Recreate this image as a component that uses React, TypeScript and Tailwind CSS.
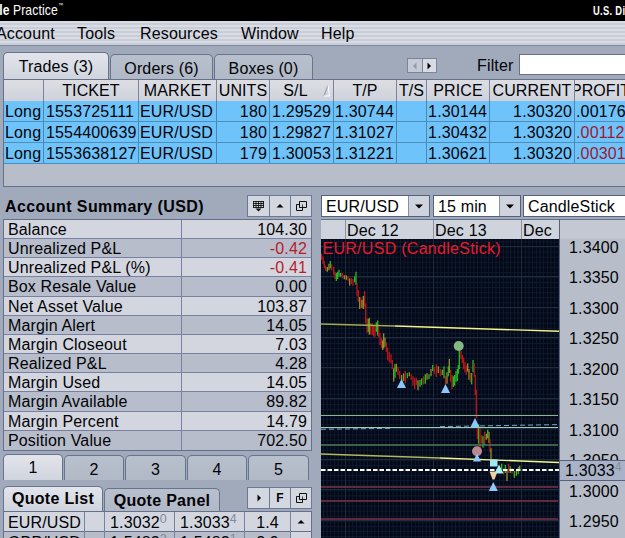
import type { ReactNode } from "react";
import clsx from "clsx";

const MENU = [
  { label: "Account", width: "-ml-[4px] w-[81px]" },
  { label: "Tools", width: "w-[63px]" },
  { label: "Resources", width: "w-[101px]" },
  { label: "Window", width: "w-[80px]" },
  { label: "Help", width: "w-[60px]" },
];

const TRADE_COLS = "grid grid-cols-[40px_95px_78px_53px_64px_63px_30px_63px_85px_60px]";

const TRADES = [
  ["Long", "1553725111", "EUR/USD", "180", "1.29529", "1.30744", "", "1.30144", "1.30320", ".00176"],
  ["Long", "1554400639", "EUR/USD", "180", "1.29827", "1.31027", "", "1.30432", "1.30320", ".00112"],
  ["Long", "1553638127", "EUR/USD", "179", "1.30053", "1.31221", "", "1.30621", "1.30320", ".00301"],
];

const SUMMARY = [
  ["Balance", "104.30"],
  ["Unrealized P&L", "-0.42"],
  ["Unrealized P&L (%)", "-0.41"],
  ["Box Resale Value", "0.00"],
  ["Net Asset Value", "103.87"],
  ["Margin Alert", "14.05"],
  ["Margin Closeout", "7.03"],
  ["Realized P&L", "4.28"],
  ["Margin Used", "14.05"],
  ["Margin Available", "89.82"],
  ["Margin Percent", "14.79"],
  ["Position Value", "702.50"],
];

const QUOTES = [
  { pair: "EUR/USD", bid: "1.3032", bidPip: "0", ask: "1.3033", askPip: "4", spread: "1.4" },
  { pair: "GBP/USD", bid: "1.5482", bidPip: "2", ask: "1.5482", askPip: "1", spread: "2.9" },
];

const PRICES = ["1.3400", "1.3350", "1.3300", "1.3250", "1.3200", "1.3150", "1.3100", "1.3050", "1.3000", "1.2950"];

const COLORS: Record<string, string> = { r: "#b81616", g: "#20b820", o: "#8f8f2a" };

// x, high, low, colour - in thirds of a pixel
type Candle = [number, number, number, string];

const CANDLES: Candle[] = [
  [20, 56, 74, "r"], [24, 64, 88, "r"], [28, 78, 100, "r"], [32, 92, 108, "r"], [37, 96, 110, "o"],
  [42, 86, 106, "o"], [46, 78, 100, "g"], [50, 88, 106, "r"], [56, 95, 120, "r"], [60, 110, 132, "r"],
  [64, 114, 138, "g"], [68, 110, 132, "g"], [72, 104, 125, "g"], [77, 114, 125, "o"], [82, 113, 130, "r"],
  [88, 121, 133, "o"], [94, 121, 134, "o"], [99, 123, 137, "r"], [104, 130, 152, "o"], [109, 130, 147, "r"],
  [114, 132, 152, "r"], [119, 124, 142, "g"], [123, 110, 150, "g"], [126, 145, 182, "r"], [130, 165, 200, "r"],
  [134, 186, 222, "o"], [138, 190, 220, "r"], [141, 195, 218, "o"], [145, 183, 222, "o"], [149, 168, 215, "r"],
  [152, 205, 265, "r"], [156, 250, 293, "r"], [160, 252, 290, "g"], [163, 248, 299, "o"], [167, 264, 298, "r"],
  [172, 265, 300, "r"], [176, 270, 305, "r"], [180, 274, 305, "r"], [184, 262, 290, "g"], [188, 256, 302, "g"],
  [191, 275, 308, "r"], [195, 295, 330, "r"], [199, 310, 338, "r"], [203, 316, 345, "o"], [206, 295, 340, "o"],
  [210, 308, 335, "o"], [214, 322, 350, "r"], [218, 338, 376, "r"], [223, 350, 382, "r"], [228, 358, 385, "r"],
  [232, 375, 402, "r"], [236, 400, 440, "o"], [240, 388, 428, "g"], [244, 386, 410, "o"], [249, 395, 420, "r"],
  [254, 408, 432, "r"], [260, 420, 455, "o"], [266, 415, 438, "o"], [271, 408, 445, "r"], [277, 414, 430, "g"],
  [283, 412, 424, "o"], [289, 418, 434, "r"], [294, 424, 452, "r"], [299, 428, 462, "r"], [304, 428, 450, "r"],
  [309, 436, 466, "o"], [315, 435, 455, "g"], [320, 430, 450, "g"], [326, 424, 448, "r"], [331, 418, 446, "g"],
  [336, 415, 434, "o"], [342, 418, 432, "g"], [348, 402, 424, "o"], [353, 390, 408, "g"], [358, 396, 416, "r"],
  [364, 388, 426, "r"], [370, 394, 414, "o"], [376, 402, 424, "r"], [382, 404, 420, "o"], [387, 394, 430, "g"],
  [392, 422, 448, "r"], [396, 412, 446, "o"], [400, 394, 424, "g"], [403, 372, 414, "o"], [407, 404, 440, "r"],
  [411, 420, 462, "r"], [415, 424, 456, "g"], [419, 420, 452, "g"], [423, 408, 440, "g"], [427, 402, 438, "g"],
  [430, 390, 416, "g"], [433, 345, 402, "g"], [438, 348, 372, "r"], [442, 360, 384, "r"], [446, 368, 402, "r"],
  [450, 382, 412, "r"], [454, 392, 420, "r"], [458, 385, 410, "o"], [462, 402, 434, "o"], [466, 414, 440, "r"],
  [470, 414, 448, "g"], [474, 375, 412, "g"], [478, 385, 425, "r"], [481, 420, 480, "r"], [484, 464, 550, "r"],
  [487, 574, 612, "r"], [491, 568, 626, "g"], [495, 578, 640, "r"], [500, 600, 624, "r"], [504, 604, 638, "g"],
  [509, 590, 630, "r"], [514, 596, 614, "o"], [518, 584, 610, "g"], [522, 590, 624, "o"], [525, 612, 652, "r"],
  [528, 640, 672, "o"], [560, 686, 706, "g"], [566, 700, 718, "r"], [571, 690, 714, "g"], [576, 708, 738, "o"],
  [581, 686, 714, "r"], [586, 694, 714, "g"], [591, 700, 716, "r"], [598, 708, 728, "g"], [604, 708, 722, "o"],
  [610, 696, 718, "g"], [614, 692, 704, "o"],
];

function Triangle({ x, y, fill = "#8cc8fa", s = 4.5 }: { x: number; y: number; fill?: string; s?: number }) {
  return <path d={`M${x} ${y - s} L${x + s} ${y + s} L${x - s} ${y + s} Z`} fill={fill} />;
}

function Chart() {
  return (
    <svg width="238" height="299" viewBox="321 239 238 299" className="block bg-[#030817]">
      <defs>
        <pattern id="fine" x="345" y="277" width="3.67" height="5.08" patternUnits="userSpaceOnUse">
          <path d="M0.5 0V5.08M0 0.5H3.67" stroke="#101c30" strokeWidth="0.8" />
        </pattern>
      </defs>
      <rect x="321" y="239" width="238" height="299" fill="url(#fine)" />
      <g stroke="#1f2c3e" strokeWidth="1">
        {[345.5, 433.5, 521.5].map((x) => (
          <line key={x} x1={x} x2={x} y1="239" y2="538" />
        ))}
        {[247, 277, 308, 338, 368, 399, 429, 460, 490, 521].map((y) => (
          <line key={y} x1="321" x2="559" y1={y - 0.5} y2={y - 0.5} />
        ))}
      </g>
      <g transform="translate(315 235) scale(0.33333)" strokeWidth="4">
        {CANDLES.map(([x, hi, lo, c]) => (
          <line key={x} x1={x} x2={x} y1={hi} y2={lo} stroke={COLORS[c]} />
        ))}
      </g>
      <g fill="none" strokeWidth="1">
        <path d="M321 415.5H558" stroke="#8fb38c" />
        <path d="M321 427.5H558" stroke="#9ccdb4" />
        <path d="M321 445H558" stroke="#4b7c55" strokeWidth="1.4" />
        <path d="M321 487H558M321 501H558M321 519H558" stroke="#7c3347" strokeWidth="1.5" />
        <path d="M321 429.3L392 428.3M440 426.6L559 424.6" stroke="#7aa3c8" strokeDasharray="5 3" />
        <path d="M321 324L395 326" stroke="#a2ab52" strokeWidth="1.4" />
        <path d="M395 326L559 331.3" stroke="#f4f48c" strokeWidth="1.4" />
        <path d="M321 454L440 458" stroke="#b4b75c" strokeWidth="1.4" />
        <path d="M440 458L559 462.5" stroke="#f4f48c" strokeWidth="1.4" />
      </g>
      <path d="M321 470H559" stroke="#fff" strokeWidth="2" strokeDasharray="4.5 2" />
      <circle cx="458.7" cy="346" r="5" fill="#86b886" />
      <Triangle x={401.5} y={383.5} />
      <Triangle x={445.5} y={388.5} />
      <Triangle x={475} y={422.5} />
      <circle cx="477" cy="451.3" r="5" fill="#b98991" />
      <Triangle x={477} y={457.5} s={4} />
      <path d="M489.5 471.5h8l-3 8h-2z" fill="#f0cf9c" />
      <rect x="490" y="459.5" width="7.5" height="7" fill="#9feaf2" />
      <Triangle x={499} y={469} fill="#a9f0f2" />
      <Triangle x={493.3} y={486.5} />
      <text x="322.5" y="254" fill="#e81a2c" fontSize="16" letterSpacing="0.28" fontFamily="Liberation Sans, sans-serif">
        EUR/USD (CandleStick)
      </text>
    </svg>
  );
}

function IconArrow({ dir, color = "#000" }: { dir: "up" | "down" | "left" | "right"; color?: string }) {
  const d = {
    up: "M1.5 6.5L5 3L8.5 6.5Z",
    down: "M1 3.5H9L5 7.5Z",
    left: "M6.5 1.5V8.5L3 5Z",
    right: "M3.5 1.5V8.5L7 5Z",
  }[dir];
  return (
    <svg width="10" height="10" viewBox="0 0 10 10">
      <path d={d} fill={color} />
    </svg>
  );
}

function IconWindows() {
  return (
    <svg width="11" height="11" viewBox="0 0 11 11" fill="none" stroke="#111">
      <path d="M0.5 3.5H6.5V9.5H0.5Z" />
      <path d="M3.5 0.5H10.5V6.5H3.5Z" fill="#d3d7e0" />
      <path d="M3.5 6.5H6.5V3.5" strokeWidth="0.8" />
    </svg>
  );
}

function IconGrid() {
  return (
    <svg width="11" height="11" viewBox="0 0 11 11" fill="none" stroke="#111">
      <path d="M0 0.5H11M0 2.5H11M0 4.5H11M0 6.5H11" strokeWidth="0.9" />
      <path d="M0.5 0V7M3 0V7M5.5 0V7M8 0V7M10.5 0V7" strokeWidth="0.9" />
      <path d="M2.5 7.5H8.5L5.5 10.5Z" fill="#111" stroke="none" />
    </svg>
  );
}

function ToolButton({ children }: { children: ReactNode }) {
  return (
    <div className="grid w-[21px] place-items-center border-l border-[#6c7894] bg-[#d3d7e0] first:border-l-0">
      {children}
    </div>
  );
}

function Tab({ label, active, className }: { label: string; active?: boolean; className: string }) {
  return (
    <div
      className={clsx(
        "flex shrink-0 items-center justify-center rounded-t-[5px] border border-b-0 border-[#68738c]",
        active ? "bg-linear-to-b from-[#e3e5eb] to-[#d0d4dd]" : "bg-linear-to-b from-[#b9c0cd] to-[#b1b8c6]",
        className,
      )}
    >
      {label}
    </div>
  );
}

function Select({ value, className }: { value: string; className: string }) {
  return (
    <div className={clsx("flex h-[22px] shrink-0 border border-[#56617c] bg-white", className)}>
      <div className="flex-1 pl-1 leading-[22px]">{value}</div>
      <div className="grid w-[21px] place-items-center border-l border-[#8590a8] bg-[#cfd3dd]">
        <IconArrow dir="down" />
      </div>
    </div>
  );
}

function TradesPanel() {
  const heads = ["", "TICKET", "MARKET", "UNITS", "S/L", "T/P", "T/S", "PRICE", "CURRENT", "PROFIT"];
  return (
    <div className="ml-[3px] h-[108px] overflow-hidden border border-r-0 border-[#65708a] bg-[#b8bec9]">
      <div className={clsx(TRADE_COLS, "h-[21px] bg-linear-to-b from-[#dcdee4] to-[#cfd2da] tracking-[0.1px]")}>
        {heads.map((h, i) => (
          <div
            key={i}
            className={clsx(
              "relative flex justify-center overflow-hidden border-r border-[#7b849a] leading-[22px]",
              h === "S/L" && "pr-3",
              h === "PROFIT" && "pr-[8px]",
            )}
          >
            {h}
            {h === "S/L" && (
              <svg width="8" height="14" viewBox="0 0 8 14" className="absolute right-0.5 top-1" fill="none">
                <path d="M1 12L5 1" stroke="#8a93a6" />
                <path d="M5 1L6.5 12H1" stroke="#fff" />
              </svg>
            )}
          </div>
        ))}
      </div>
      {TRADES.map((row, r) => (
        <div key={row[1]} className={clsx(TRADE_COLS, "h-[21px] border-b border-[#4c8fba] bg-[#6fc3fb]")}>
          {row.map((cell, i) => (
            <div
              key={i}
              className={clsx(
                "overflow-hidden border-r border-[#4a88b0] whitespace-nowrap leading-[22px]",
                i === 1 ? "pl-[2px]" : i < 3 ? "pl-px" : i < 9 ? "pr-0.5 text-right" : "pl-px",
                i === 9 && r > 0 && "text-[#a01830]",
              )}
            >
              {cell}
            </div>
          ))}
        </div>
      ))}
    </div>
  );
}

function AccountSummary() {
  return (
    <div>
      <div className="flex h-[24px] justify-between">
        <div className="pl-[2px] font-bold leading-[24px] tracking-[0.42px]">Account Summary (USD)</div>
        <div className="flex h-[22px] border border-[#6c7894]">
          <ToolButton><IconGrid /></ToolButton>
          <ToolButton><IconArrow dir="up" /></ToolButton>
          <ToolButton><IconWindows /></ToolButton>
        </div>
      </div>
      <div className="grid h-[232px] grid-rows-12 border border-[#65708a]">
        {SUMMARY.map(([label, value], i) => (
          <div
            key={label}
            className={clsx(
              "flex border-b border-[#7882a0] leading-[20px] last:border-b-0",
              i % 2 === 0 ? "bg-[#d3d6df]" : "bg-[#b7bdca]",
            )}
          >
            <div className="h-full w-[178px] border-r border-[#7882a0] pl-[4px]">{label}</div>
            <div className={clsx("flex-1 pr-1 text-right", value.startsWith("-") && "text-[#b81c2c]")}>{value}</div>
          </div>
        ))}
      </div>
    </div>
  );
}

function QuoteList() {
  return (
    <div>
      <div className="flex h-[25px] items-end gap-px font-bold tracking-[0.3px]">
        <Tab label="Quote List" active className="h-[25px] w-[100px]" />
        <Tab label="Quote Panel" className="h-[23px] w-[116px] pt-0.5" />
        <div className="mb-0.5 ml-auto flex h-[22px] border border-[#6c7894]">
          <ToolButton><IconArrow dir="right" /></ToolButton>
          <ToolButton><span className="text-[12px] leading-none">F</span></ToolButton>
          <ToolButton><IconWindows /></ToolButton>
        </div>
      </div>
      <div className="flex border border-b-0 border-[#65708a]">
        <div className="flex-1">
          {QUOTES.map((q, i) => (
            <div
              key={q.pair}
              className={clsx(
                "grid h-[20px] grid-cols-[81px_20px_70px_70px_1fr] border-b border-[#65708a] leading-[21px]",
                "*:border-r *:border-[#7882a0]",
                i % 2 === 0 ? "bg-[#d3d6df]" : "bg-[#b7bdca]",
              )}
            >
              <div className="pl-[4px]">{q.pair}</div>
              <div />
              <div className="flex pl-[5px]">
                {q.bid}<span className="-mt-[3px] text-[12.5px] text-[#858a98]">{q.bidPip}</span>
              </div>
              <div className="flex pl-[5px]">
                {q.ask}<span className="-mt-[3px] text-[12.5px] text-[#858a98]">{q.askPip}</span>
              </div>
              <div className="text-center">{q.spread}</div>
            </div>
          ))}
        </div>
        <div className="w-[20px] bg-[#d3d6df]">
          <div className="grid h-[20px] place-items-center border-b border-[#65708a]">
            <IconArrow dir="up" />
          </div>
        </div>
      </div>
    </div>
  );
}

function ChartPanel() {
  return (
    <div className="w-[304px] shrink-0">
      <div className="flex h-[24px]">
        <Select value="EUR/USD" className="mr-[3px] w-[109px]" />
        <Select value="15 min" className="mr-[2px] w-[88px]" />
        <Select value="CandleStick" className="w-[140px]" />
      </div>
      <div className="flex h-[319px] overflow-hidden">
        <div className="w-[238px] shrink-0">
          <div className="grid h-[20px] grid-cols-[24px_88px_88px_38px] border-t border-[#65708a] bg-[#cfd3dc] leading-[21px] tracking-[0.2px]">
            <div />
            <div className="border-l border-[#8a93a6] pl-px">Dec 12</div>
            <div className="border-l border-[#8a93a6] pl-px">Dec 13</div>
            <div className="border-l border-[#8a93a6] pl-px">Dec</div>
          </div>
          <Chart />
        </div>
        <div className="relative flex-1 border-l border-[#56617c] bg-[#b8bec9]">
          <div className="h-[20px] border-t border-[#65708a] bg-[#c3c8d2]" />
          <div className="-mt-[6px]">
            {PRICES.map((p) => (
              <div key={p} className="h-[30.45px] pl-[9px] leading-[30px]">{p}</div>
            ))}
          </div>
          <div className="absolute left-0 top-[241px] flex h-[21px] w-full border-y border-[#56617c] bg-[#a9b2c6] pl-[5px] leading-[19px]">
            1.3033<span className="-mt-[3px] text-[12px] text-[#858da0]">4</span>
          </div>
        </div>
      </div>
    </div>
  );
}

export default function App() {
  return (
    <div className="h-[538px] w-[625px] overflow-hidden bg-[#a0aabb] font-['Liberation_Sans',Arial,sans-serif] text-[16px] tracking-[0.15px] text-[#020306]">
      <header className="flex h-[21px] justify-between overflow-hidden bg-black text-white">
        <div className="flex origin-left scale-x-[0.84] text-[14.5px] leading-[20px]">
          <b className="-ml-px mr-1">le</b>Practice<span className="text-[6px] leading-[10px]">™</span>
        </div>
        <div className="w-[32px] text-[12px] font-bold leading-[23px]">
          <div className="w-[60px] origin-left scale-x-[0.78] tracking-[0.4px]">U.S. Div</div>
        </div>
      </header>

      <nav className="flex h-[25px] border-b border-[#7f8ba3] bg-[repeating-linear-gradient(180deg,#d9dce3_0px,#d9dce3_2px,#c9cdd7_2px,#c9cdd7_4px)] leading-[25px]">
        {MENU.map((m) => (
          <div key={m.label} className={clsx("shrink-0", m.width)}>{m.label}</div>
        ))}
      </nav>

      <div className="flex h-[33px] items-end gap-px pl-[3px]">
        <Tab label="Trades (3)" active className="h-[27px] w-[106px] pt-0.5" />
        <Tab label="Orders (6)" className="h-[25px] w-[103px] pt-1" />
        <Tab label="Boxes (0)" className="h-[25px] w-[99px] pt-1" />
        <div className="mb-[6px] ml-[93px] flex h-[15px] w-[30px] border border-[#7a859d] bg-[#c5cad5]">
          <div className="grid flex-1 place-items-center border-r border-[#7a859d]">
            <IconArrow dir="left" color="#929aaa" />
          </div>
          <div className="grid flex-1 place-items-center bg-[#d9dce3]">
            <IconArrow dir="right" />
          </div>
        </div>
        <div className="ml-[39px] w-[41px] pb-px">Filter</div>
        <div className="mb-1 h-[21px] flex-1 border border-r-0 border-[#65708a] bg-white" />
      </div>

      <TradesPanel />

      <main className="flex pt-[8px]">
        <div className="ml-[3px] mr-[9px] w-[309px] shrink-0">
          <AccountSummary />
          <div className="mt-[3px] flex h-[26px] items-end gap-px">
            <Tab label="1" active className="h-[26px] w-[60px] pt-px" />
            <Tab label="2" className="h-[25px] w-[60px] pt-1" />
            <Tab label="3" className="h-[25px] w-[61px] pt-1" />
            <Tab label="4" className="h-[25px] w-[60px] pt-1" />
            <Tab label="5" className="h-[25px] w-[61px] pt-1" />
          </div>
          <div className="mt-[6px]">
            <QuoteList />
          </div>
        </div>
        <ChartPanel />
      </main>
    </div>
  );
}
